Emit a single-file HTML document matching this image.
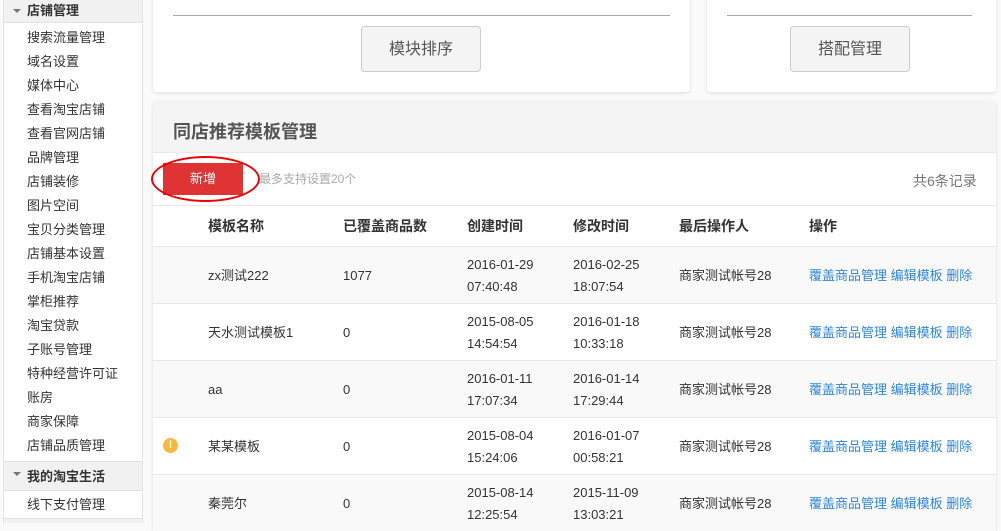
<!DOCTYPE html>
<html><head><meta charset="utf-8"><style>
*{margin:0;padding:0;box-sizing:border-box}
body{width:1001px;height:523px;overflow:hidden;background:#fafafa;font-family:"Liberation Sans","Noto Sans CJK SC",sans-serif;color:#333;position:relative;font-size:13px}
.abs{position:absolute}
.side{left:3px;top:0;width:140px;height:523px;background:#fff;border-left:1px solid #e4e4e4;border-right:1px solid #e4e4e4}
.sh{position:absolute;left:0;width:138px;height:24px;background:#f1f1f1;border-bottom:1px solid #e2e2e2;font-weight:bold;font-size:13px;line-height:23px;padding-left:23px;color:#333}
.sh:before{content:"";position:absolute;left:9px;top:10px;border-left:4px solid transparent;border-right:4px solid transparent;border-top:4px solid #777}
.si{position:absolute;left:23px;font-size:13px;color:#333;line-height:16px}
.card{background:#fff;box-shadow:0 1px 3px rgba(0,0,0,.12);border-radius:3px}
.btn{position:absolute;background:#f4f4f4;border:1px solid #ccc;border-radius:4px;font-size:16px;color:#555;text-align:center;line-height:45px}
.row{position:absolute;left:153px;width:843px;height:57px;border-top:1px solid #e8e8e8}
.c{position:absolute;font-size:13px;color:#333;line-height:22px}
.h{position:absolute;top:216px;font-size:14px;font-weight:bold;color:#333}
.lk{color:#2f86e0}
</style></head><body>
<div class="abs side">
<div class="sh" style="top:-1px">店铺管理</div>
<div class="si" style="top:30px">搜索流量管理</div>
<div class="si" style="top:54px">域名设置</div>
<div class="si" style="top:78px">媒体中心</div>
<div class="si" style="top:102px">查看淘宝店铺</div>
<div class="si" style="top:126px">查看官网店铺</div>
<div class="si" style="top:150px">品牌管理</div>
<div class="si" style="top:174px">店铺装修</div>
<div class="si" style="top:198px">图片空间</div>
<div class="si" style="top:222px">宝贝分类管理</div>
<div class="si" style="top:246px">店铺基本设置</div>
<div class="si" style="top:270px">手机淘宝店铺</div>
<div class="si" style="top:294px">掌柜推荐</div>
<div class="si" style="top:318px">淘宝贷款</div>
<div class="si" style="top:342px">子账号管理</div>
<div class="si" style="top:366px">特种经营许可证</div>
<div class="si" style="top:390px">账房</div>
<div class="si" style="top:414px">商家保障</div>
<div class="si" style="top:438px">店铺品质管理</div>
<div class="sh" style="top:461px;border-top:1px solid #e2e2e2;height:30px;line-height:30px">我的淘宝生活</div>
<div class="si" style="top:497px">线下支付管理</div>
<div class="abs" style="left:0;top:518px;width:138px;height:5px;background:#f1f1f1;border-top:1px solid #e2e2e2"></div>
</div>
<div class="abs card" style="left:153px;top:-5px;width:537px;height:97px"></div>
<div class="abs" style="left:173px;top:15px;width:497px;height:1px;background:#aaa"></div>
<div class="btn" style="left:361px;top:26px;width:120px;height:46px">模块排序</div>
<div class="abs card" style="left:707px;top:-5px;width:289px;height:97px"></div>
<div class="abs" style="left:727px;top:15px;width:245px;height:1px;background:#aaa"></div>
<div class="btn" style="left:790px;top:26px;width:120px;height:46px">搭配管理</div>
<div class="abs card" style="left:153px;top:101px;width:843px;height:430px"></div>
<div class="abs" style="left:153px;top:101px;width:843px;height:52px;background:#f4f4f4;border-bottom:1px solid #e8e8e8;border-radius:3px 3px 0 0"></div>
<div class="abs" style="left:173px;top:118px;font-size:18px;font-weight:bold;color:#555">同店推荐模板管理</div>
<div class="abs" style="left:163px;top:163px;width:80px;height:32px;background:#e03434;color:#fff;text-align:center;line-height:32px;font-size:13px">新增</div>
<div class="abs" style="left:151px;top:156px;width:109px;height:46px;border:2px solid #e00;border-radius:50%"></div>
<div class="abs" style="left:259px;top:170px;font-size:12px;color:#aaa">最多支持设置20个</div>
<div class="abs" style="left:913px;top:171px;font-size:14px;color:#777">共6条记录</div>
<div class="abs" style="left:153px;top:205px;width:843px;height:1px;background:#e8e8e8"></div>
<div class="h" style="left:208px">模板名称</div>
<div class="h" style="left:343px">已覆盖商品数</div>
<div class="h" style="left:467px">创建时间</div>
<div class="h" style="left:573px">修改时间</div>
<div class="h" style="left:679px">最后操作人</div>
<div class="h" style="left:809px">操作</div>

<div class="row" style="top:246px;background:#f9f9f9">
<div class="c" style="left:55px;top:18px">zx测试222</div><div class="c" style="left:190px;top:18px">1077</div>
<div class="c" style="left:314px;top:7px">2016-01-29<br>07:40:48</div><div class="c" style="left:420px;top:7px">2016-02-25<br>18:07:54</div>
<div class="c" style="left:526px;top:18px">商家测试帐号28</div><div class="c lk" style="left:656px;top:18px">覆盖商品管理 编辑模板 删除</div></div>
<div class="row" style="top:303px;background:#fff">
<div class="c" style="left:55px;top:18px">天水测试模板1</div><div class="c" style="left:190px;top:18px">0</div>
<div class="c" style="left:314px;top:7px">2015-08-05<br>14:54:54</div><div class="c" style="left:420px;top:7px">2016-01-18<br>10:33:18</div>
<div class="c" style="left:526px;top:18px">商家测试帐号28</div><div class="c lk" style="left:656px;top:18px">覆盖商品管理 编辑模板 删除</div></div>
<div class="row" style="top:360px;background:#f9f9f9">
<div class="c" style="left:55px;top:18px">aa</div><div class="c" style="left:190px;top:18px">0</div>
<div class="c" style="left:314px;top:7px">2016-01-11<br>17:07:34</div><div class="c" style="left:420px;top:7px">2016-01-14<br>17:29:44</div>
<div class="c" style="left:526px;top:18px">商家测试帐号28</div><div class="c lk" style="left:656px;top:18px">覆盖商品管理 编辑模板 删除</div></div>
<div class="row" style="top:417px;background:#fff">
<div class="abs" style="left:10px;top:20px;width:15px;height:15px;border-radius:50%;background:#f8b83c;color:#fff;font-size:11px;font-weight:bold;text-align:center;line-height:15px">!</div>
<div class="c" style="left:55px;top:18px">某某模板</div><div class="c" style="left:190px;top:18px">0</div>
<div class="c" style="left:314px;top:7px">2015-08-04<br>15:24:06</div><div class="c" style="left:420px;top:7px">2016-01-07<br>00:58:21</div>
<div class="c" style="left:526px;top:18px">商家测试帐号28</div><div class="c lk" style="left:656px;top:18px">覆盖商品管理 编辑模板 删除</div></div>
<div class="row" style="top:474px;background:#f9f9f9">
<div class="c" style="left:55px;top:18px">秦莞尔</div><div class="c" style="left:190px;top:18px">0</div>
<div class="c" style="left:314px;top:7px">2015-08-14<br>12:25:54</div><div class="c" style="left:420px;top:7px">2015-11-09<br>13:03:21</div>
<div class="c" style="left:526px;top:18px">商家测试帐号28</div><div class="c lk" style="left:656px;top:18px">覆盖商品管理 编辑模板 删除</div></div>
</body></html>
